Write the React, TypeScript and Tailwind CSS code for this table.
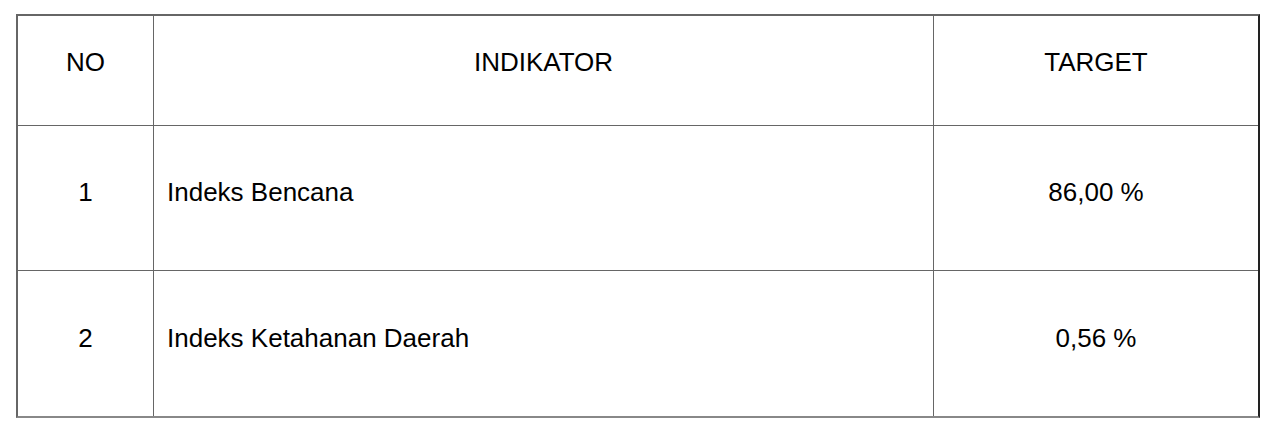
import React from "react";

const rows = [
  { no: "1", ind: "Indeks Bencana", target: "86,00 %" },
  { no: "2", ind: "Indeks Ketahanan Daerah", target: "0,56 %" },
];

export default function App() {
  return (
    <div
      className="w-[1275px] h-[433px] bg-white pt-[14px] pl-[16px] text-black"
      style={{ fontFamily: '"Liberation Sans", Arial, sans-serif' }}
    >
      <div className="w-[1244px] border-l-2 border-t-2 border-[#666] border-r-2 border-r-[#222] border-b-2 border-b-[#888]">
        <div className="grid grid-cols-[136px_780px_324px] grid-rows-[110px_145px_145px] text-[26px] leading-none">
          <div className="flex items-center justify-center pb-[18px] border-r border-b border-[#666]">NO</div>
          <div className="flex items-center justify-center pb-[18px] border-r border-b border-[#666]">INDIKATOR</div>
          <div className="flex items-center justify-center pb-[18px] border-b border-[#666]">TARGET</div>
          {rows.map((r, i) => (
            <React.Fragment key={r.no}>
              <div className={`flex items-center justify-center pb-[12px] border-r border-[#666] ${i === 0 ? "border-b" : ""}`}>{r.no}</div>
              <div className={`flex items-center justify-start pl-[13px] pb-[12px] border-r border-[#666] ${i === 0 ? "border-b" : ""}`}>{r.ind}</div>
              <div className={`flex items-center justify-center pb-[12px] ${i === 0 ? "border-b border-[#666]" : ""}`}>{r.target}</div>
            </React.Fragment>
          ))}
        </div>
      </div>
    </div>
  );
}
